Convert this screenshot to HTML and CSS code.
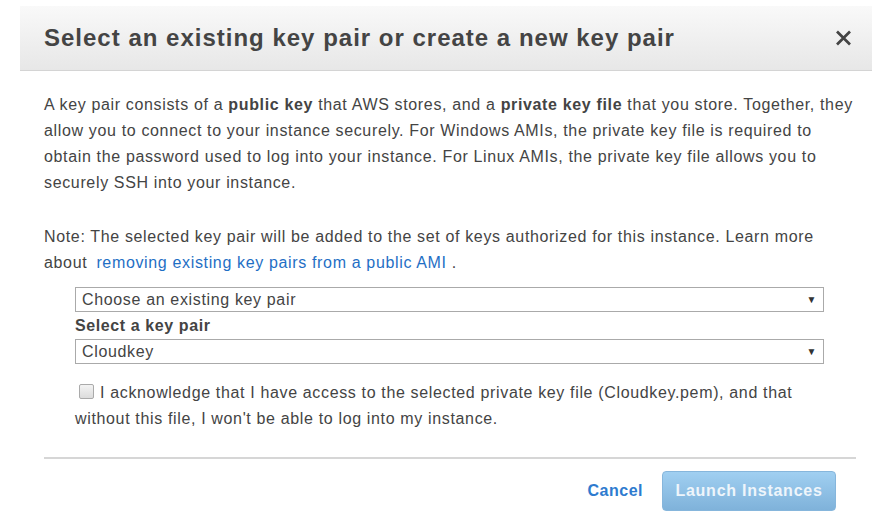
FILE: index.html
```html
<!DOCTYPE html>
<html>
<head>
<meta charset="utf-8">
<link rel="stylesheet" href="styles.css">
</head>
<body>
<div class="dialog">
  <div class="header">
    <h1 class="title">Select an existing key pair or create a new key pair</h1>
    <span class="close">
      <svg width="17" height="16" viewBox="0 0 17 16"><path d="M2 1.5 L15 14.5 M15 1.5 L2 14.5" stroke="#444" stroke-width="2.7" fill="none"/></svg>
    </span>
  </div>
  <div class="body">
    <p class="para">A key pair consists of a <b>public key</b> that AWS stores, and a <b>private key file</b> that you store. Together, they allow you to connect to your instance securely. For Windows AMIs, the private key file is required to obtain the password used to log into your instance. For Linux AMIs, the private key file allows you to securely SSH into your instance.</p>
    <p class="para">Note: The selected key pair will be added to the set of keys authorized for this instance. Learn more about <a class="link" href="#">removing existing key pairs from a public AMI</a> .</p>
    <div class="form">
      <div class="select"><span>Choose an existing key pair</span><span class="arrow">&#9660;</span></div>
      <div class="label">Select a key pair</div>
      <div class="select"><span>Cloudkey</span><span class="arrow">&#9660;</span></div>
      <div class="ack">
        <span class="check"></span>I acknowledge that I have access to the selected private key file (Cloudkey.pem), and that without this file, I won't be able to log into my instance.
      </div>
    </div>
  </div>
  <div class="footer">
    <a class="cancel" href="#">Cancel</a>
    <span class="launch">Launch Instances</span>
  </div>
</div>
</body>
</html>
```
FILE: styles.css
```css
html, body {
  margin: 0;
  padding: 0;
  background: #fff;
}
body {
  font-family: "Liberation Sans", Arial, sans-serif;
  color: #444;
}
.dialog {
  width: 877px;
  padding-top: 6px;
}
.header {
  margin-left: 20px;
  width: 852px;
  height: 65px;
  box-sizing: border-box;
  background: linear-gradient(to bottom, #f9f9f9, #e7e7e7);
  border-bottom: 1px solid #d4d4d4;
  display: flex;
  align-items: center;
  justify-content: space-between;
  padding: 0 20px 0 24px;
}
.title {
  margin: 0;
  font-size: 24px;
  font-weight: bold;
  color: #444;
  letter-spacing: 1px;
}
.close {
  display: flex;
  width: 17px;
  height: 16px;
}
.body {
  padding: 21px 20px 0 44px;
  letter-spacing: 0.65px;
}
.para {
  margin: 0 0 28px 0;
  font-size: 16px;
  line-height: 26px;
}
.link {
  color: #1f6fc5;
  text-decoration: none;
  margin-left: 4px;
}
.form {
  margin-left: 31px;
  width: 749px;
  margin-top: -17px;
}
.select {
  height: 25px;
  box-sizing: border-box;
  border: 1px solid #aaa;
  display: flex;
  align-items: center;
  justify-content: space-between;
  padding: 0 6px 0 6px;
  font-size: 16px;
  color: #444;
}
.arrow {
  font-size: 10px;
  color: #333;
}
.label {
  font-weight: bold;
  font-size: 16px;
  line-height: 27px;
  height: 27px;
  letter-spacing: 0.6px;
}
.ack {
  margin-top: 16px;
  font-size: 16px;
  line-height: 26px;
}
.check {
  display: inline-block;
  width: 13px;
  height: 13px;
  border: 1px solid #aaa;
  border-radius: 2px;
  background: linear-gradient(#f3f3f3, #dcdcdc);
  margin: 0 6px 0 4px;
  vertical-align: -1px;
}
.footer {
  margin: 25px 21px 0 44px;
  border-top: 2px solid #d6d6d6;
  display: flex;
  justify-content: flex-end;
  align-items: center;
  gap: 19px;
  padding: 12px 20px 0 0;
}
.cancel {
  color: #2e7bcf;
  font-weight: bold;
  font-size: 16px;
  text-decoration: none;
  letter-spacing: 0.5px;
}
.launch {
  width: 174px;
  height: 40px;
  box-sizing: border-box;
  border: 1px solid #86b6dc;
  border-radius: 4px;
  background: linear-gradient(#a0cff1, #7fb2da);
  color: #eef5fb;
  font-weight: bold;
  font-size: 16px;
  letter-spacing: 0.75px;
  display: flex;
  align-items: center;
  justify-content: center;
}
```
